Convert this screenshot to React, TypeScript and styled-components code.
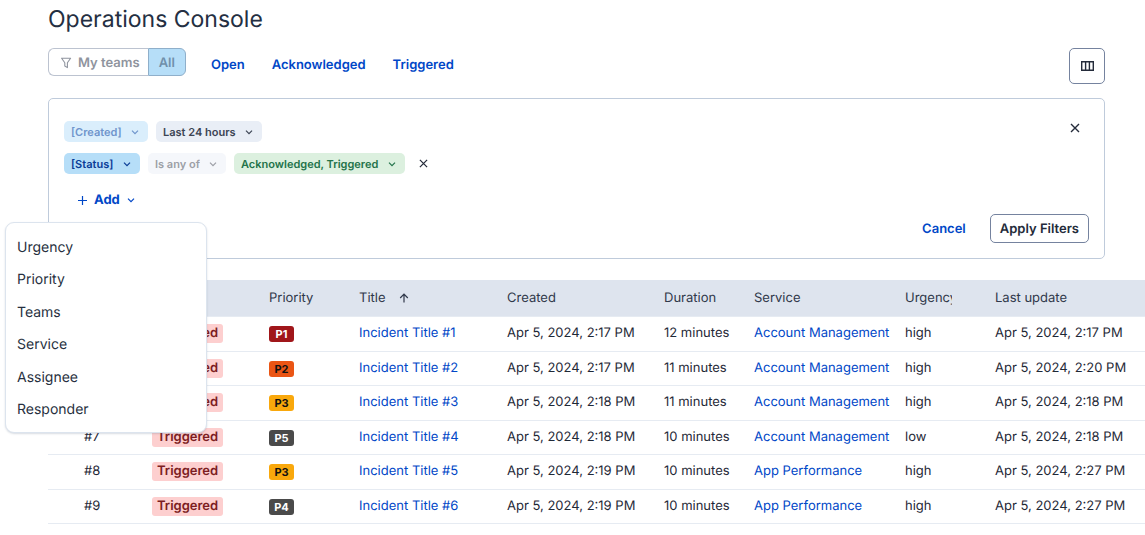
import React, { useState } from "react";
import styled, { createGlobalStyle } from "styled-components";

const GlobalStyle = createGlobalStyle`
  *, *::before, *::after { box-sizing: border-box; }
  body {
    margin: 0;
    background: #fff;
    color: #1f2937;
    font-family: Inter, "Liberation Sans", sans-serif;
    font-size: 13px;
    line-height: 20px;
    text-rendering: geometricPrecision;
  }
  button, select { font: inherit; text-rendering: inherit; cursor: pointer; }
  a { color: #0047c7; text-decoration: none; }
`;

const Page = styled.main`
  padding: 3px 0 12px 48px;
`;

const Content = styled.div`
  margin-right: 40px;
`;

const PageTitle = styled.h1`
  margin: 0;
  color: #242f42;
  font-size: 23px;
  font-weight: 400;
  line-height: 32px;
`;

const Toolbar = styled.div`
  display: flex;
  align-items: flex-start;
  margin-top: 13px;
`;

const Segments = styled.div`
  display: flex;
  height: 28px;
`;

const Segment = styled.button<{ $active?: boolean }>`
  display: flex;
  align-items: center;
  gap: 6px;
  padding: 1px ${(p) => (p.$active ? 10 : 8)}px 0 ${(p) => (p.$active ? 10 : 11)}px;
  border: 1px solid ${(p) => (p.$active ? "#8fafca" : "#bcc3d0")};
  border-radius: ${(p) => (p.$active ? "0 6px 6px 0" : "6px 0 0 6px")};
  border-right-width: ${(p) => (p.$active ? 1 : 0)}px;
  background: ${(p) => (p.$active ? "#b6def8" : "#fff")};
  color: ${(p) => (p.$active ? "#7090ab" : "#8f949e")};
  font-weight: 600;
`;

const Tabs = styled.nav`
  display: flex;
  flex: 1;
  gap: 27px;
  padding: 7px 0 0 25px;
`;

const TabLink = styled.a`
  font-weight: 600;
`;

const ColumnsButton = styled.button`
  display: flex;
  align-items: center;
  justify-content: center;
  width: 36px;
  height: 36px;
  padding: 0;
  border: 1px solid #75839f;
  border-radius: 5px;
  background: #fff;
  color: #242b3a;
`;

const FilterPanel = styled.section`
  margin-top: 14px;
  padding: 22px 15px 15px;
  border: 1px solid #bfcbdb;
  border-radius: 5px;
`;

const PanelBody = styled.div`
  display: flex;
  align-items: flex-start;
  justify-content: space-between;
`;

const FilterRows = styled.div`
  display: flex;
  flex-direction: column;
  align-items: flex-start;
`;

const FilterRow = styled.div`
  display: flex;
  align-items: center;
  gap: 8px;
  margin-bottom: 11px;
`;

type Tone = "blue" | "paleBlue" | "grey" | "paleGrey" | "green";

const tones: Record<Tone, { bg: string; fg: string }> = {
  blue: { bg: "#b6def8", fg: "#0a3c96" },
  paleBlue: { bg: "#daeefc", fg: "#6f95cc" },
  grey: { bg: "#e9eef6", fg: "#3c4454" },
  paleGrey: { bg: "#f5f7fb", fg: "#9c9fa6" },
  green: { bg: "#dcf0df", fg: "#23734a" },
};

const Chip = styled.span<{ $tone: Tone }>`
  display: inline-grid;
  grid-template-columns: auto 26px;
  align-items: center;
  border-radius: 5px;
  background: ${(p) => tones[p.$tone].bg};
  color: ${(p) => tones[p.$tone].fg};

  svg {
    grid-area: 1 / 2;
    justify-self: center;
    pointer-events: none;
  }
`;

const ChipSelect = styled.select`
  grid-area: 1 / 1 / 2 / 3;
  height: 21px;
  margin: 0;
  padding: 0 26px 0 7px;
  border: 0;
  border-radius: 5px;
  background: transparent;
  color: inherit;
  appearance: none;
  font-size: 11px;
  font-weight: 600;
  opacity: 1;
`;

const IconButton = styled.button`
  display: flex;
  align-items: center;
  justify-content: center;
  width: 20px;
  height: 20px;
  padding: 0;
  border: 0;
  background: none;
  color: #242b3a;
`;

const AddMenu = styled.div`
  position: relative;
  margin-left: 8px;
`;

const AddButton = styled.button`
  display: flex;
  align-items: center;
  gap: 7px;
  height: 28px;
  padding: 2px 6px 0;
  border: 0;
  background: none;
  color: #0047c7;
  font-weight: 700;
`;

const Menu = styled.ul`
  position: absolute;
  z-index: 2;
  top: 37px;
  left: -67px;
  width: 202px;
  margin: 0;
  padding: 8px 0 6px;
  border: 1px solid #dce4ee;
  border-radius: 9px;
  background: #fff;
  box-shadow: 0 1px 2px rgba(60, 80, 110, 0.2);
  list-style: none;
`;

const MenuItem = styled.li`
  display: flex;
  height: 32px;

  &:nth-child(even) {
    height: 33px;
  }
`;

const MenuAction = styled.button`
  flex: 1;
  padding: 1px 11px 0;
  border: 0;
  background: none;
  color: #273040;
  font-size: 14px;
  text-align: left;
`;

const CloseSlot = styled.div`
  padding: 0 4px 0 0;
  margin-top: -3px;
`;

const PanelActions = styled.div`
  display: flex;
  align-items: center;
  justify-content: flex-end;
  gap: 14px;
  margin-top: 1px;
`;

const TextButton = styled.button`
  padding: 0 10px;
  border: 0;
  background: none;
  color: #0047c7;
  font-weight: 600;
`;

const OutlineButton = styled.button`
  height: 29px;
  padding: 0 9px;
  border: 1px solid #75839f;
  border-radius: 5px;
  background: #fff;
  color: #242b3a;
  font-weight: 600;
`;

const TableScroll = styled.div`
  margin-top: 21px;
  overflow-x: auto;
`;

const Table = styled.table`
  width: 100%;
  min-width: 1097px;
  border-collapse: separate;
  border-spacing: 0;
  table-layout: fixed;
`;

const Col = styled.col<{ $width?: number }>`
  width: ${(p) => (p.$width ? `${p.$width}px` : "auto")};
`;

const HeadCell = styled.th<{ $clipped?: boolean }>`
  height: 37px;
  padding: 0 ${(p) => (p.$clipped ? 22 : 12)}px 0 21px;
  border-bottom: 1px solid #e6ebf2;
  background: #dee4ee;
  color: #30384a;
  font-weight: 400;
  text-align: left;

  &:first-child {
    padding-left: 36px;
  }
`;

const HeadLabel = styled.span`
  display: flex;
  align-items: center;
  gap: 13px;
  overflow: hidden;
  white-space: nowrap;
`;

const BodyRow = styled.tr`
  height: 35px;

  &:nth-child(even) {
    height: 34px;
  }
`;

const Cell = styled.td`
  padding: 0 0 2px 21px;
  border-bottom: 1px solid #e6ebf2;
  white-space: nowrap;

  &:first-child {
    padding-left: 36px;
  }
`;

const StatusBadge = styled.span`
  display: inline-block;
  padding: 0 5px;
  border-radius: 3px;
  background: #fdcfcf;
  color: #7c1d22;
  font-weight: 600;
  line-height: 19px;
`;

type Level = "P1" | "P2" | "P3" | "P4" | "P5";

const levels: Record<Level, { bg: string; fg: string }> = {
  P1: { bg: "#a0161a", fg: "#fff" },
  P2: { bg: "#ea5514", fg: "#111" },
  P3: { bg: "#f9a80c", fg: "#111" },
  P4: { bg: "#4a4a4a", fg: "#fff" },
  P5: { bg: "#4a4a4a", fg: "#fff" },
};

const PriorityBadge = styled.span<{ $level: Level }>`
  display: block;
  width: 25px;
  margin-top: 2px;
  border-radius: 3px;
  background: ${(p) => levels[p.$level].bg};
  color: ${(p) => levels[p.$level].fg};
  font-size: 11px;
  font-weight: 700;
  line-height: 16px;
  text-align: center;
`;

const Chevron = () => (
  <svg width="8" height="8" viewBox="0 0 8 8" fill="none" stroke="currentColor" strokeWidth="1.2" aria-hidden="true">
    <path d="M1 2.6 4 5.6 7 2.6" />
  </svg>
);

const Cross = ({ size }: { size: number }) => (
  <svg width={size} height={size} viewBox="0 0 10 10" fill="none" stroke="currentColor" strokeWidth="1.4" aria-hidden="true">
    <path d="M1 1 9 9M9 1 1 9" />
  </svg>
);

const Plus = () => (
  <svg width="9" height="9" viewBox="0 0 9 9" fill="none" stroke="currentColor" strokeWidth="1.2" aria-hidden="true">
    <path d="M4.5 0V9M0 4.5H9" />
  </svg>
);

const Funnel = () => (
  <svg width="12" height="12" viewBox="0 0 12 12" fill="none" stroke="currentColor" strokeWidth="1.1" strokeLinejoin="round" aria-hidden="true">
    <path d="M1.6 1.3H10.6L7.4 5.8V10.6L4.8 9V5.8Z" />
  </svg>
);

const ColumnsIcon = () => (
  <svg width="13" height="10" viewBox="0 0 13 10" fill="none" stroke="currentColor" strokeWidth="1.4" aria-hidden="true">
    <path d="M0.7 0.7H12.3V9.3H0.7ZM4.6 0.7V9.3M8.4 0.7V9.3" />
  </svg>
);

const SortUp = () => (
  <svg width="10" height="10" viewBox="0 0 10 10" fill="none" stroke="currentColor" strokeWidth="1.2" aria-hidden="true">
    <path d="M5 9.5V1.2M1.2 5 5 1.2 8.8 5" />
  </svg>
);

interface FilterChipProps {
  tone: Tone;
  label: string;
  value: string;
  disabled?: boolean;
}

const FilterChip = ({ tone, label, value, disabled }: FilterChipProps) => (
  <Chip $tone={tone}>
    <ChipSelect aria-label={label} disabled={disabled}>
      <option>{value}</option>
    </ChipSelect>
    <Chevron />
  </Chip>
);

const columns: { name: string; width?: number; clipped?: boolean }[] = [
  { name: "#", width: 83 },
  { name: "Status", width: 117 },
  { name: "Priority", width: 90 },
  { name: "Title", width: 148 },
  { name: "Created", width: 157 },
  { name: "Duration", width: 90 },
  { name: "Service", width: 151 },
  { name: "Urgency", width: 90, clipped: true },
  { name: "Last update" },
];

interface Incident {
  id: string;
  level: Level;
  title: string;
  created: string;
  duration: string;
  service: string;
  urgency: string;
  updated: string;
}

const incidents: Incident[] = [
  { id: "#4", level: "P1", title: "Incident Title #1", created: "Apr 5, 2024, 2:17 PM", duration: "12 minutes", service: "Account Management", urgency: "high", updated: "Apr 5, 2024, 2:17 PM" },
  { id: "#5", level: "P2", title: "Incident Title #2", created: "Apr 5, 2024, 2:17 PM", duration: "11 minutes", service: "Account Management", urgency: "high", updated: "Apr 5, 2024, 2:20 PM" },
  { id: "#6", level: "P3", title: "Incident Title #3", created: "Apr 5, 2024, 2:18 PM", duration: "11 minutes", service: "Account Management", urgency: "high", updated: "Apr 5, 2024, 2:18 PM" },
  { id: "#7", level: "P5", title: "Incident Title #4", created: "Apr 5, 2024, 2:18 PM", duration: "10 minutes", service: "Account Management", urgency: "low", updated: "Apr 5, 2024, 2:18 PM" },
  { id: "#8", level: "P3", title: "Incident Title #5", created: "Apr 5, 2024, 2:19 PM", duration: "10 minutes", service: "App Performance", urgency: "high", updated: "Apr 5, 2024, 2:27 PM" },
  { id: "#9", level: "P4", title: "Incident Title #6", created: "Apr 5, 2024, 2:19 PM", duration: "10 minutes", service: "App Performance", urgency: "high", updated: "Apr 5, 2024, 2:27 PM" },
];

const filterFields = ["Urgency", "Priority", "Teams", "Service", "Assignee", "Responder"];

export default function App() {
  const [menuOpen, setMenuOpen] = useState(true);

  return (
    <>
      <GlobalStyle />
      <Page>
        <Content>
          <PageTitle>Operations Console</PageTitle>
          <Toolbar>
            <Segments>
              <Segment type="button">
                <Funnel />
                My teams
              </Segment>
              <Segment type="button" $active aria-pressed="true">
                All
              </Segment>
            </Segments>
            <Tabs>
              <TabLink href="#open">Open</TabLink>
              <TabLink href="#acknowledged">Acknowledged</TabLink>
              <TabLink href="#triggered">Triggered</TabLink>
            </Tabs>
            <ColumnsButton type="button" aria-label="Columns">
              <ColumnsIcon />
            </ColumnsButton>
          </Toolbar>

          <FilterPanel aria-label="Filters">
            <PanelBody>
              <FilterRows>
                <FilterRow>
                  <FilterChip tone="paleBlue" label="Field" value="[Created]" disabled />
                  <FilterChip tone="grey" label="Time range" value="Last 24 hours" />
                </FilterRow>
                <FilterRow>
                  <FilterChip tone="blue" label="Field" value="[Status]" />
                  <FilterChip tone="paleGrey" label="Operator" value="Is any of" disabled />
                  <FilterChip tone="green" label="Statuses" value="Acknowledged, Triggered" />
                  <IconButton type="button" aria-label="Remove status filter">
                    <Cross size={9} />
                  </IconButton>
                </FilterRow>
                <AddMenu>
                  <AddButton type="button" aria-expanded={menuOpen} onClick={() => setMenuOpen(!menuOpen)}>
                    <Plus />
                    Add
                    <Chevron />
                  </AddButton>
                  {menuOpen && (
                    <Menu>
                      {filterFields.map((field) => (
                        <MenuItem key={field}>
                          <MenuAction type="button">{field}</MenuAction>
                        </MenuItem>
                      ))}
                    </Menu>
                  )}
                </AddMenu>
              </FilterRows>
              <CloseSlot>
                <IconButton type="button" aria-label="Close filters">
                  <Cross size={10} />
                </IconButton>
              </CloseSlot>
            </PanelBody>
            <PanelActions>
              <TextButton type="button">Cancel</TextButton>
              <OutlineButton type="button">Apply Filters</OutlineButton>
            </PanelActions>
          </FilterPanel>
        </Content>

        <TableScroll>
          <Table>
            <colgroup>
              {columns.map((c) => (
                <Col key={c.name} $width={c.width} />
              ))}
            </colgroup>
            <thead>
              <tr>
                {columns.map((c) => (
                  <HeadCell key={c.name} scope="col" $clipped={c.clipped}>
                    <HeadLabel>
                      {c.name}
                      {c.name === "Title" && <SortUp />}
                    </HeadLabel>
                  </HeadCell>
                ))}
              </tr>
            </thead>
            <tbody>
              {incidents.map((row) => (
                <BodyRow key={row.id}>
                  <Cell>{row.id}</Cell>
                  <Cell>
                    <StatusBadge>Triggered</StatusBadge>
                  </Cell>
                  <Cell>
                    <PriorityBadge $level={row.level}>{row.level}</PriorityBadge>
                  </Cell>
                  <Cell>
                    <a href="#incident">{row.title}</a>
                  </Cell>
                  <Cell>{row.created}</Cell>
                  <Cell>{row.duration}</Cell>
                  <Cell>
                    <a href="#service">{row.service}</a>
                  </Cell>
                  <Cell>{row.urgency}</Cell>
                  <Cell>{row.updated}</Cell>
                </BodyRow>
              ))}
            </tbody>
          </Table>
        </TableScroll>
      </Page>
    </>
  );
}
